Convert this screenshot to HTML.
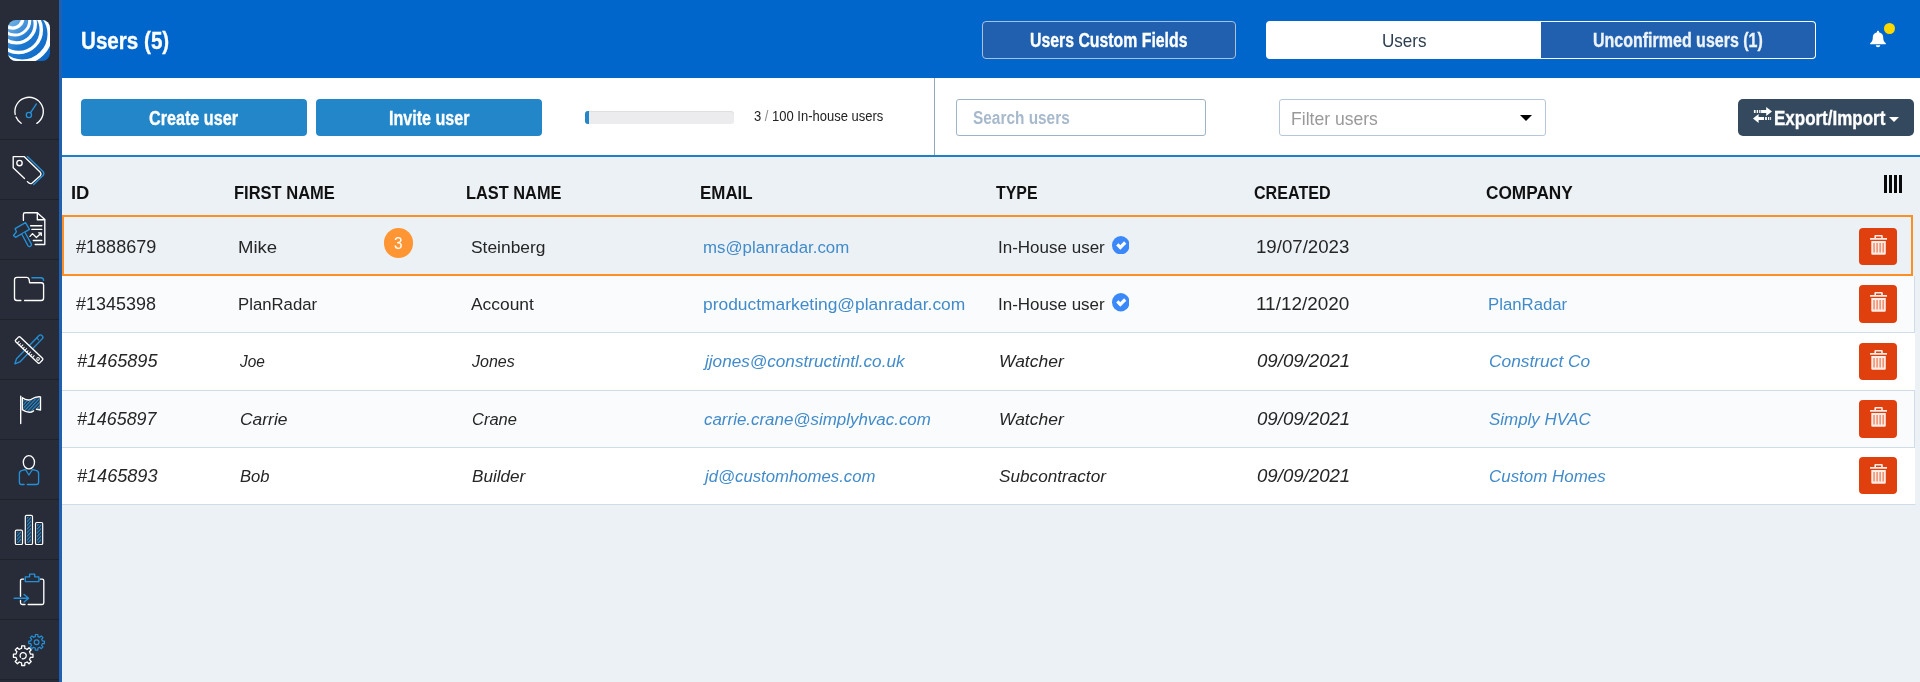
<!DOCTYPE html>
<html lang="en"><head><meta charset="utf-8"><title>Users</title>
<style>
*{box-sizing:border-box;margin:0;padding:0}
html,body{width:1920px;height:682px;overflow:hidden}
body{position:relative;background:#ecf1f5;font-family:"Liberation Sans",sans-serif;color:#222}
.t{position:absolute;display:block;white-space:nowrap;transform-origin:0 0}
aside.sb{position:absolute;left:0;top:0;width:62px;height:682px;background:#272c38;border-right:3px solid #1f60b0}
.sbsvg{position:absolute;left:0;top:0}
header.top{position:absolute;left:62px;top:0;width:1858px;height:78px;background:#0066cc}
header.top>*,section.bar>*,main.tbl>*{margin-left:-62px}
.hbtn{position:absolute;background:#2060ae;border:1px solid #a9c0de;border-radius:4px}
.tabw{position:absolute;background:#fff;border-radius:4px 0 0 4px}
.hbtn.tabr{border-color:#fff;border-left:0;border-radius:0 4px 4px 0}
.bell{position:absolute}
.dot{position:absolute;left:1883.9px;top:22.9px;width:11.2px;height:11.2px;border-radius:50%;background:#fcd800}
section.bar{position:absolute;left:62px;top:78px;width:1858px;height:79px;background:#fff;border-bottom:2px solid #1f7fc6}
section.bar>*{margin-top:-78px}
.pbtn{position:absolute;background:#2286c9;border-radius:4px}
.prog{position:absolute;left:585px;top:111px;width:149px;height:13px;background:#ececee;border-radius:3px;overflow:hidden;box-shadow:inset 0 1px 1px rgba(0,0,0,.06)}
.prog i{display:block;width:4px;height:100%;background:#2286c9}
.vdiv{position:absolute;left:934px;top:78px;width:1px;height:77px;background:#93a8bf}
.inp{position:absolute;background:#fff;border:1px solid #9fb3c8;border-radius:3px}
.tri{position:absolute;width:0;height:0;border-left:6px solid transparent;border-right:6px solid transparent;border-top:6.5px solid #000}
.ebtn{position:absolute;background:#34495e;border-radius:5px}
.exch{position:absolute}
.caret{position:absolute;width:0;height:0;border-left:5px solid transparent;border-right:5px solid transparent;border-top:5.5px solid #fff}
main.tbl{position:absolute;left:62px;top:157px;width:1858px;height:525px}
main.tbl>*{margin-top:-157px}
.row{position:absolute;left:62px;width:1854px;background:#fff;border-right:1px solid #eef2f6}
.row.alt{width:1853px;background:#f9fbfc;border:1px solid #d0dce7;border-left:0}
.row.r1{background:#ecf1f5;border:2px solid #ff8f24;width:1851px;z-index:2}
.cols{position:absolute;left:1884px;top:175px;width:18px;height:18px;display:flex;justify-content:space-between}
.cols b{display:block;width:3px;height:18px;background:#0a0a0a}
.badge{position:absolute;left:383.5px;top:228.4px;width:29.8px;height:29.8px;border-radius:50%;background:#ff9633;z-index:3}
.chk{position:absolute;z-index:3}
.del{position:absolute;left:1859px;width:38px;height:38px;background:#e0400e;border-radius:4px;z-index:3}
.trash{position:absolute;left:11px;top:7.2px}
main.tbl .t{z-index:4}
</style></head>
<body>
<aside class="sb">
<svg class="sbsvg" width="59" height="682" viewBox="0 0 59 682" fill="none" stroke-linecap="round" stroke-linejoin="round" stroke-width="1.35">
<defs>
<pattern id="hatch" width="2.5" height="2.5" patternUnits="userSpaceOnUse" patternTransform="rotate(-47)"><rect width="2.5" height="1.2" fill="#2490d8"/></pattern>
<clipPath id="lgclip"><rect x="8" y="20" width="42" height="41" rx="8" ry="8"/></clipPath>
<linearGradient id="lggrad" x1="0" y1="0" x2="1" y2="1"><stop offset="0" stop-color="#7ab8e6"/><stop offset="0.45" stop-color="#1c78cf"/><stop offset="1" stop-color="#0a66c4"/></linearGradient>
<filter id="lgblur" x="-10%" y="-10%" width="120%" height="120%"><feGaussianBlur stdDeviation="0.45"/></filter>
</defs>
<g clip-path="url(#lgclip)"><rect x="8" y="20" width="42" height="41" fill="url(#lggrad)"/>
<g stroke="#fff" fill="none" filter="url(#lgblur)">
<circle cx="12.8" cy="18.2" r="9.9" stroke-width="3.3"/>
<circle cx="15" cy="20.4" r="14.7" stroke-width="3"/>
<circle cx="16.5" cy="24.1" r="18.8" stroke-width="3.4"/>
<circle cx="18.7" cy="29.9" r="22.6" stroke-width="3.5"/>
<circle cx="22.3" cy="34.3" r="27.5" stroke-width="4.6"/>
</g></g>
<rect x="0" y="139" width="59" height="1" fill="#1e222b" stroke="none"/>
<rect x="0" y="199" width="59" height="1" fill="#1e222b" stroke="none"/>
<rect x="0" y="259" width="59" height="1" fill="#1e222b" stroke="none"/>
<rect x="0" y="319" width="59" height="1" fill="#1e222b" stroke="none"/>
<rect x="0" y="379" width="59" height="1" fill="#1e222b" stroke="none"/>
<rect x="0" y="439" width="59" height="1" fill="#1e222b" stroke="none"/>
<rect x="0" y="499" width="59" height="1" fill="#1e222b" stroke="none"/>
<rect x="0" y="559" width="59" height="1" fill="#1e222b" stroke="none"/>
<rect x="0" y="619" width="59" height="1" fill="#1e222b" stroke="none"/>
<rect x="0" y="679" width="59" height="1" fill="#1e222b" stroke="none"/>
<path d="M36.83,123.41 A14.2,14.2 0 1 0 15.21,114.45" stroke="#fff"/>
<path d="M16.03,117.05 A14.2,14.2 0 0 0 21.16,123.27" stroke="#fff"/>
<circle cx="28.9" cy="115" r="2.6" stroke="#2490d8"/>
<path d="M30.4,112.8 L36.4,103.9" stroke="#2490d8"/>
<path d="M24.5,178.6 L13.2,167.7 V156.6 H24.1 L40.3,172.2 Q41.8,174 40.3,175.8 L31.9,183.2 Q30,184.6 27.4,181.6" stroke="#fff"/>
<circle cx="19.5" cy="163" r="2.7" stroke="#fff"/>
<path d="M27.4,156.6 L43.2,171.8 Q44.6,173.6 43,175.6 L33.7,184.5" stroke="#2490d8"/>
<path d="M23.4,220.3 V214.4 Q23.4,212.7 25,212.7 H37.3 L44.8,219.6 V244.5 H35.2" stroke="#fff"/>
<path d="M37.3,212.9 V219.7 H44.6" stroke="#fff"/>
<path d="M30.6,225.7 H41.8 M31.9,229.4 H41.8 M33.3,240.5 H41.8" stroke="#fff"/>
<path d="M30,236.4 L32.5,233.6 L36.4,237.5 L41,233.2 M38.6,232.8 L41.3,232.8 L41.3,235.4" stroke="#fff" stroke-width="1.3"/>
<path d="M15.1,228.6 L25.5,222.6 L29.5,229.3 L15.5,237.3 L13.5,235.5 L16.4,231.8 Z" stroke="#2490d8" fill="#272c38"/>
<path d="M21.8,234.3 L27.8,245.4 A1.9,1.9 0 0 0 31.3,243.9 L25,232.5" stroke="#2490d8" fill="#272c38"/>
<path d="M20.9,300.5 H17 Q14.5,300.5 14.5,298 V279.8 Q14.5,277.4 17,277.4 H26.8 Q28.7,277.4 29.1,279.5 L29.6,282.7 H41.2 Q43.6,282.7 43.6,285 V298 Q43.6,300.5 41.2,300.5 H24.6" stroke="#fff"/>
<path d="M31.9,277.7 H40.8 Q43.6,277.7 43.6,280.4" stroke="#2490d8"/>
<g transform="translate(28.6,349.6) rotate(-46)">
<path d="M-15,-2.3 H17.1 Q19.4,-2.3 19.4,0 Q19.4,2.3 17.1,2.3 H-15 L-19.8,0 Z" stroke="#2490d8"/>
<path d="M14,-2.3 V0.5" stroke="#2490d8" stroke-width="1"/>
</g>
<g transform="translate(29.1,350) rotate(43.5)">
<rect x="-16.6" y="-3.2" width="33.2" height="6.4" rx="1.2" stroke="#fff" fill="#272c38"/>
<path d="M-13.20,3.2 V0.60" stroke="#fff" stroke-width="1"/>
<path d="M-10.60,3.2 V1.40" stroke="#fff" stroke-width="1"/>
<path d="M-8.00,3.2 V0.60" stroke="#fff" stroke-width="1"/>
<path d="M-5.40,3.2 V1.40" stroke="#fff" stroke-width="1"/>
<path d="M-2.80,3.2 V0.60" stroke="#fff" stroke-width="1"/>
<path d="M-0.20,3.2 V1.40" stroke="#fff" stroke-width="1"/>
<path d="M2.40,3.2 V0.60" stroke="#fff" stroke-width="1"/>
<path d="M5.00,3.2 V1.40" stroke="#fff" stroke-width="1"/>
<path d="M7.60,3.2 V0.60" stroke="#fff" stroke-width="1"/>
<circle cx="12.6" cy="0.3" r="1.3" stroke="#fff" stroke-width="1"/>
</g>
<path d="M23.3,399.3 Q27,401.9 31.3,400.3 Q36,397.4 39.6,397.8 V408.8 Q37.6,408.2 35.6,408.6 L33,410 Q29,412.8 23.3,408.8 Z" fill="url(#hatch)" stroke="none"/>
<path d="M22.3,397.7 Q27,401.2 31.3,399.3 Q36,396.2 40.5,396.8 V410 Q38.4,409.2 36.4,409.2 M33.6,410.9 Q29,414.2 22.3,409.6 V397.7" stroke="#fff"/>
<path d="M20.7,396.2 V423.6" stroke="#fff"/>
<ellipse cx="28.9" cy="462.3" rx="5.6" ry="6.6" stroke="#fff"/>
<path d="M24.1,484.5 H21.5 Q19.4,484.5 19.4,482.3 V473.4 Q19.4,471 22.3,470.4 L25.5,469.5 L28.9,475 L32.5,469.5 L35.8,470.4 Q38.6,471 38.6,473.4 V482.3 Q38.6,484.5 36.4,484.5 H27.3" stroke="#2490d8"/>
<rect x="16.8" y="531.7" width="4.2" height="11.3" fill="url(#hatch)" stroke="none"/>
<rect x="15.3" y="530.2" width="7.2" height="14.3" rx="1.3" stroke="#fff" stroke-width="1.2"/>
<rect x="26.8" y="516.8" width="4.2" height="26.2" fill="url(#hatch)" stroke="none"/>
<rect x="25.3" y="515.3" width="7.2" height="29.2" rx="1.3" stroke="#fff" stroke-width="1.2"/>
<rect x="37" y="524" width="4.2" height="19" fill="url(#hatch)" stroke="none"/>
<rect x="35.5" y="522.5" width="7.2" height="22" rx="1.3" stroke="#fff" stroke-width="1.2"/>
<path d="M23.6,579.1 H22 Q20.5,579.1 20.5,580.7 V596.2 M20.5,600.4 V602.8 Q20.5,604.5 22.3,604.5 H25 M28.2,604.5 H42.2 Q43.8,604.5 43.8,602.8 V580.7 Q43.8,579.1 42.2,579.1 H40.2" stroke="#fff"/>
<path d="M25.3,576.8 H29.6 V574.1 H34.7 V576.8 H38.9 V581.6 H25.3 Z" stroke="#2490d8"/>
<path d="M14.1,598.2 H28.4 M24.1,594.4 L28.6,598.2 L24.1,602" stroke="#2490d8"/>
<path d="M21.54,648.49 L21.65,645.92 L24.75,645.92 L24.86,648.49 A7.40,7.40 0 0 1 27.13,649.43 L27.13,649.43 L29.02,647.69 L31.21,649.88 L29.47,651.77 A7.40,7.40 0 0 1 30.41,654.04 L30.41,654.04 L32.98,654.15 L32.98,657.25 L30.41,657.36 A7.40,7.40 0 0 1 29.47,659.63 L29.47,659.63 L31.21,661.52 L29.02,663.71 L27.13,661.97 A7.40,7.40 0 0 1 24.86,662.91 L24.86,662.91 L24.75,665.48 L21.65,665.48 L21.54,662.91 A7.40,7.40 0 0 1 19.27,661.97 L19.27,661.97 L17.38,663.71 L15.19,661.52 L16.93,659.63 A7.40,7.40 0 0 1 15.99,657.36 L15.99,657.36 L13.42,657.25 L13.42,654.15 L15.99,654.04 A7.40,7.40 0 0 1 16.93,651.77 L16.93,651.77 L15.19,649.88 L17.38,647.69 L19.27,649.43 A7.40,7.40 0 0 1 21.54,648.49 Z" stroke="#fff" stroke-width="1.3"/>
<path d="M20.5,657.25 A3.1,3.1 0 1 1 22.14,658.6" stroke="#fff" stroke-width="1.3"/>
<path d="M35.28,636.55 L35.36,634.50 L37.84,634.50 L37.92,636.55 A5.90,5.90 0 0 1 39.73,637.30 L39.73,637.30 L41.24,635.91 L42.99,637.66 L41.60,639.17 A5.90,5.90 0 0 1 42.35,640.98 L42.35,640.98 L44.40,641.06 L44.40,643.54 L42.35,643.62 A5.90,5.90 0 0 1 41.60,645.43 L41.60,645.43 L42.99,646.94 L41.24,648.69 L39.73,647.30 A5.90,5.90 0 0 1 37.92,648.05 L37.92,648.05 L37.84,650.10 L35.36,650.10 L35.28,648.05 A5.90,5.90 0 0 1 33.47,647.30 L33.47,647.30 L31.96,648.69 L30.21,646.94 L31.60,645.43 A5.90,5.90 0 0 1 30.85,643.62 L30.85,643.62 L28.80,643.54 L28.80,641.06 L30.85,640.98 A5.90,5.90 0 0 1 31.60,639.17 L31.60,639.17 L30.21,637.66 L31.96,635.91 L33.47,637.30 A5.90,5.90 0 0 1 35.28,636.55 Z" stroke="#2490d8" stroke-width="1.2"/>
<circle cx="36.6" cy="642.3" r="2.4" stroke="#2490d8" stroke-width="1.2"/>
</svg>
</aside>
<header class="top">
<span class="t" style="left:80.56px;top:27px;font-size:24.6px;line-height:27px;font-weight:700;color:#fff;transform:scaleX(0.8383);-webkit-text-stroke:0.35px currentColor;">Users (5)</span>
<div class="hbtn" style="left:982px;top:21px;width:254px;height:38px"></div>
<span class="t" style="left:1030.48px;top:29px;font-size:19.4px;line-height:22px;font-weight:700;color:#fff;transform:scaleX(0.8163);-webkit-text-stroke:0.35px currentColor;">Users Custom Fields</span>
<div class="tabw" style="left:1266px;top:21px;width:275px;height:38px"></div>
<span class="t" style="left:1381.96px;top:31px;font-size:18.2px;line-height:20px;color:#2c3e50;transform:scaleX(0.9375);">Users</span>
<div class="hbtn tabr" style="left:1541px;top:21px;width:275px;height:38px"></div>
<span class="t" style="left:1593.17px;top:29px;font-size:19.4px;line-height:22px;font-weight:700;color:#eef3f9;transform:scaleX(0.8251);-webkit-text-stroke:0.35px currentColor;">Unconfirmed users (1)</span>
<svg class="bell" style="left:1870px;top:30px" width="16" height="18" viewBox="0 0 16 18"><path fill="#fff" d="M8,0.8 C8.6,0.8 9,1.2 9,1.8 V2.2 C11.6,2.7 13.2,4.7 13.2,7.3 C13.2,10.2 13.9,11.6 15.6,13 C16.2,13.6 15.9,14.3 15.2,14.3 H0.8 C0.1,14.3 -0.2,13.6 0.4,13 C2.1,11.6 2.8,10.2 2.8,7.3 C2.8,4.7 4.4,2.7 7,2.2 V1.8 C7,1.2 7.4,0.8 8,0.8 Z M5.8,15.3 H10.2 C10.2,16.5 9.2,17.3 8,17.3 C6.8,17.3 5.8,16.5 5.8,15.3 Z"/></svg>
<i class="dot"></i>
</header>
<section class="bar">
<div class="pbtn" style="left:81px;top:99px;width:226px;height:37px"></div>
<span class="t" style="left:149.00px;top:107px;font-size:19.4px;line-height:22px;font-weight:700;color:#fff;transform:scaleX(0.8343);-webkit-text-stroke:0.35px currentColor;">Create user</span>
<div class="pbtn" style="left:316px;top:99px;width:226px;height:37px"></div>
<span class="t" style="left:388.67px;top:107px;font-size:19.4px;line-height:22px;font-weight:700;color:#fff;transform:scaleX(0.8295);-webkit-text-stroke:0.35px currentColor;">Invite user</span>
<div class="prog"><i></i></div>
<span class="t" style="left:754.00px;top:108px;font-size:14px;line-height:16px;color:#222;transform:scaleX(0.9281);">3 <span style="color:#888">/</span> 100 In-house users</span>
<i class="vdiv"></i>
<div class="inp" style="left:956px;top:99px;width:250px;height:37px;border-color:#9fb3c8"></div>
<span class="t" style="left:972.50px;top:107px;font-size:19.2px;line-height:21px;font-weight:700;color:#a7b9cc;transform:scaleX(0.8026);">Search users</span>
<div class="inp" style="left:1279px;top:99px;width:267px;height:37px;border-color:#b7c7da"></div>
<span class="t" style="left:1291.23px;top:109px;font-size:18.2px;line-height:20px;color:#999;transform:scaleX(0.9657);">Filter users</span>
<i class="tri" style="left:1520px;top:115px"></i>
<div class="ebtn" style="left:1738px;top:99px;width:176px;height:37px"></div>
<svg class="exch" style="left:1752.9px;top:107px" width="19" height="16" viewBox="0 0 19 16"><path fill="#fff" d="M13.2,0 L19,4.45 L13.2,8.9 V6 H8.1 V3 H13.2 Z M0.9,3 H2.6 V6 H0.9 Z M3.7,3 H5.1 V6 H3.7 Z M6.2,3 H7.5 V6 H6.2 Z M5.6,7.1 L0,11.5 L5.6,15.9 V13 H11 V10.1 H5.6 Z M12.1,10.1 H13.9 V13 H12.1 Z M15,10.1 H16.3 V13 H15 Z M17.2,10.1 H18.1 V13 H17.2 Z"/></svg>
<span class="t" style="left:1773.62px;top:107px;font-size:19.4px;line-height:22px;font-weight:700;color:#fff;transform:scaleX(0.8756);-webkit-text-stroke:0.35px currentColor;">Export/Import</span>
<i class="caret" style="left:1889px;top:116.5px"></i>
</section>
<main class="tbl">
<span class="t" style="left:71.26px;top:183px;font-size:17.7px;line-height:20px;font-weight:700;color:#111;transform:scaleX(1.0405);">ID</span>
<span class="t" style="left:233.77px;top:183px;font-size:17.7px;line-height:20px;font-weight:700;color:#111;transform:scaleX(0.9330);">FIRST NAME</span>
<span class="t" style="left:466.47px;top:183px;font-size:17.7px;line-height:20px;font-weight:700;color:#111;transform:scaleX(0.9250);">LAST NAME</span>
<span class="t" style="left:699.64px;top:183px;font-size:17.7px;line-height:20px;font-weight:700;color:#111;transform:scaleX(0.9572);">EMAIL</span>
<span class="t" style="left:995.60px;top:183px;font-size:17.7px;line-height:20px;font-weight:700;color:#111;transform:scaleX(0.8987);">TYPE</span>
<span class="t" style="left:1253.70px;top:183px;font-size:17.7px;line-height:20px;font-weight:700;color:#111;transform:scaleX(0.9099);">CREATED</span>
<span class="t" style="left:1486.20px;top:183px;font-size:17.7px;line-height:20px;font-weight:700;color:#111;transform:scaleX(0.9743);">COMPANY</span>
<i class="cols"><b></b><b></b><b></b><b></b></i>
<div class="row r1" style="top:215px;height:61px"></div>
<div class="row alt" style="top:276px;height:57px;border-top:0"></div>
<div class="row" style="top:333px;height:57px"></div>
<div class="row alt" style="top:390px;height:58px"></div>
<div class="row" style="top:448px;height:57px;border-bottom:1px solid #d0dce7"></div>
<span class="t" style="left:75.80px;top:237px;font-size:17.8px;line-height:20px;color:#262626;transform:scaleX(1.0148);">#1888679</span>
<span class="t" style="left:237.53px;top:237px;font-size:17.4px;line-height:20px;color:#262626;transform:scaleX(1.0672);">Mike</span>
<span class="t" style="left:471.00px;top:237px;font-size:17.4px;line-height:20px;color:#262626;transform:scaleX(1.0004);">Steinberg</span>
<span class="t" style="left:702.53px;top:237px;font-size:17.4px;line-height:20px;color:#428bca;transform:scaleX(0.9682);">ms@planradar.com</span>
<span class="t" style="left:998.02px;top:237px;font-size:17.4px;line-height:20px;color:#262626;transform:scaleX(0.9775);">In-House user</span>
<span class="t" style="left:1255.55px;top:237px;font-size:17.8px;line-height:20px;color:#262626;transform:scaleX(1.0488);">19/07/2023</span>
<span class="t" style="left:76.20px;top:294px;font-size:17.8px;line-height:20px;color:#262626;transform:scaleX(1.0098);">#1345398</span>
<span class="t" style="left:237.94px;top:294px;font-size:17.4px;line-height:20px;color:#262626;transform:scaleX(0.9621);">PlanRadar</span>
<span class="t" style="left:470.90px;top:294px;font-size:17.4px;line-height:20px;color:#262626;transform:scaleX(0.9999);">Account</span>
<span class="t" style="left:702.75px;top:294px;font-size:17.4px;line-height:20px;color:#428bca;transform:scaleX(1.0001);">productmarketing@planradar.com</span>
<span class="t" style="left:997.92px;top:294px;font-size:17.4px;line-height:20px;color:#262626;transform:scaleX(0.9766);">In-House user</span>
<span class="t" style="left:1255.54px;top:294px;font-size:17.8px;line-height:20px;color:#262626;transform:scaleX(1.0647);">11/12/2020</span>
<span class="t" style="left:1487.84px;top:294px;font-size:17.4px;line-height:20px;color:#428bca;transform:scaleX(0.9634);">PlanRadar</span>
<span class="t" style="left:76.70px;top:351px;font-size:17.8px;line-height:20px;font-style:italic;color:#262626;transform:scaleX(1.0174);">#1465895</span>
<span class="t" style="left:239.79px;top:351px;font-size:17.4px;line-height:20px;font-style:italic;color:#262626;transform:scaleX(0.8887);">Joe</span>
<span class="t" style="left:472.32px;top:351px;font-size:17.4px;line-height:20px;font-style:italic;color:#262626;transform:scaleX(0.9222);">Jones</span>
<span class="t" style="left:705.27px;top:351px;font-size:17.4px;line-height:20px;font-style:italic;color:#428bca;transform:scaleX(0.9865);">jjones@constructintl.co.uk</span>
<span class="t" style="left:998.80px;top:351px;font-size:17.4px;line-height:20px;font-style:italic;color:#262626;transform:scaleX(1.0040);">Watcher</span>
<span class="t" style="left:1257.20px;top:351px;font-size:17.8px;line-height:20px;font-style:italic;color:#262626;transform:scaleX(1.0476);">09/09/2021</span>
<span class="t" style="left:1489.40px;top:351px;font-size:17.4px;line-height:20px;font-style:italic;color:#428bca;transform:scaleX(0.9979);">Construct Co</span>
<span class="t" style="left:76.70px;top:409px;font-size:17.8px;line-height:20px;font-style:italic;color:#262626;transform:scaleX(1.0047);">#1465897</span>
<span class="t" style="left:239.50px;top:409px;font-size:17.4px;line-height:20px;font-style:italic;color:#262626;transform:scaleX(1.0026);">Carrie</span>
<span class="t" style="left:472.00px;top:409px;font-size:17.4px;line-height:20px;font-style:italic;color:#262626;transform:scaleX(0.9477);">Crane</span>
<span class="t" style="left:704.20px;top:409px;font-size:17.4px;line-height:20px;font-style:italic;color:#428bca;transform:scaleX(0.9730);">carrie.crane@simplyhvac.com</span>
<span class="t" style="left:998.80px;top:409px;font-size:17.4px;line-height:20px;font-style:italic;color:#262626;transform:scaleX(1.0040);">Watcher</span>
<span class="t" style="left:1257.20px;top:409px;font-size:17.8px;line-height:20px;font-style:italic;color:#262626;transform:scaleX(1.0476);">09/09/2021</span>
<span class="t" style="left:1489.40px;top:409px;font-size:17.4px;line-height:20px;font-style:italic;color:#428bca;transform:scaleX(0.9741);">Simply HVAC</span>
<span class="t" style="left:76.70px;top:466px;font-size:17.8px;line-height:20px;font-style:italic;color:#262626;transform:scaleX(1.0174);">#1465893</span>
<span class="t" style="left:239.50px;top:466px;font-size:17.4px;line-height:20px;font-style:italic;color:#262626;transform:scaleX(0.9561);">Bob</span>
<span class="t" style="left:472.00px;top:466px;font-size:17.4px;line-height:20px;font-style:italic;color:#262626;transform:scaleX(0.9848);">Builder</span>
<span class="t" style="left:705.22px;top:466px;font-size:17.4px;line-height:20px;font-style:italic;color:#428bca;transform:scaleX(0.9623);">jd@customhomes.com</span>
<span class="t" style="left:999.40px;top:466px;font-size:17.4px;line-height:20px;font-style:italic;color:#262626;transform:scaleX(0.9874);">Subcontractor</span>
<span class="t" style="left:1257.20px;top:466px;font-size:17.8px;line-height:20px;font-style:italic;color:#262626;transform:scaleX(1.0476);">09/09/2021</span>
<span class="t" style="left:1489.40px;top:466px;font-size:17.4px;line-height:20px;font-style:italic;color:#428bca;transform:scaleX(0.9731);">Custom Homes</span>
<i class="badge"></i>
<span class="t" style="left:393.90px;top:234px;font-size:16.6px;line-height:19px;color:#fff;transform:scaleX(0.9222);">3</span>
<svg class="chk" style="left:1111.85px;top:235.7px" width="17.6" height="18.4" viewBox="0 0 17.6 18.4"><ellipse cx="8.8" cy="9.2" rx="8.8" ry="9.2" fill="#3b88fb"/><path d="M5.3,8.4 L8.3,11.4 L13.2,6.5" fill="none" stroke="#fff" stroke-width="3.2" stroke-linecap="butt" stroke-linejoin="miter"/></svg>
<svg class="chk" style="left:1111.85px;top:293.2px" width="17.6" height="18.4" viewBox="0 0 17.6 18.4"><ellipse cx="8.8" cy="9.2" rx="8.8" ry="9.2" fill="#3b88fb"/><path d="M5.3,8.4 L8.3,11.4 L13.2,6.5" fill="none" stroke="#fff" stroke-width="3.2" stroke-linecap="butt" stroke-linejoin="miter"/></svg>
<div class="del" style="top:228px;height:37px"><svg class="trash" width="17.2" height="19.8" viewBox="0 0 17.2 19.8"><path fill="#fdece6" fill-rule="evenodd" d="M4.4,3 V1 Q4.4,0 5.4,0 H11.8 Q12.8,0 12.8,1 V3 H11.2 V1.5 H6 V3 Z"/><rect x="0" y="2.9" width="17.2" height="1.9" rx="0.4" fill="#fdece6"/><path fill="#fdece6" d="M1.3,6 H15.8 V18.5 Q15.8,19.7 14.6,19.7 H2.5 Q1.3,19.7 1.3,18.5 Z"/><path fill="#ee8c6c" d="M3.3,8 H4.8 V17.6 H3.3 Z M6.35,8 H7.85 V17.6 H6.35 Z M9.4,8 H10.9 V17.6 H9.4 Z M12.45,8 H13.95 V17.6 H12.45 Z"/></svg></div>
<div class="del" style="top:285px;height:38px"><svg class="trash" width="17.2" height="19.8" viewBox="0 0 17.2 19.8"><path fill="#fdece6" fill-rule="evenodd" d="M4.4,3 V1 Q4.4,0 5.4,0 H11.8 Q12.8,0 12.8,1 V3 H11.2 V1.5 H6 V3 Z"/><rect x="0" y="2.9" width="17.2" height="1.9" rx="0.4" fill="#fdece6"/><path fill="#fdece6" d="M1.3,6 H15.8 V18.5 Q15.8,19.7 14.6,19.7 H2.5 Q1.3,19.7 1.3,18.5 Z"/><path fill="#ee8c6c" d="M3.3,8 H4.8 V17.6 H3.3 Z M6.35,8 H7.85 V17.6 H6.35 Z M9.4,8 H10.9 V17.6 H9.4 Z M12.45,8 H13.95 V17.6 H12.45 Z"/></svg></div>
<div class="del" style="top:343px;height:37px"><svg class="trash" width="17.2" height="19.8" viewBox="0 0 17.2 19.8"><path fill="#fdece6" fill-rule="evenodd" d="M4.4,3 V1 Q4.4,0 5.4,0 H11.8 Q12.8,0 12.8,1 V3 H11.2 V1.5 H6 V3 Z"/><rect x="0" y="2.9" width="17.2" height="1.9" rx="0.4" fill="#fdece6"/><path fill="#fdece6" d="M1.3,6 H15.8 V18.5 Q15.8,19.7 14.6,19.7 H2.5 Q1.3,19.7 1.3,18.5 Z"/><path fill="#ee8c6c" d="M3.3,8 H4.8 V17.6 H3.3 Z M6.35,8 H7.85 V17.6 H6.35 Z M9.4,8 H10.9 V17.6 H9.4 Z M12.45,8 H13.95 V17.6 H12.45 Z"/></svg></div>
<div class="del" style="top:400px;height:38px"><svg class="trash" width="17.2" height="19.8" viewBox="0 0 17.2 19.8"><path fill="#fdece6" fill-rule="evenodd" d="M4.4,3 V1 Q4.4,0 5.4,0 H11.8 Q12.8,0 12.8,1 V3 H11.2 V1.5 H6 V3 Z"/><rect x="0" y="2.9" width="17.2" height="1.9" rx="0.4" fill="#fdece6"/><path fill="#fdece6" d="M1.3,6 H15.8 V18.5 Q15.8,19.7 14.6,19.7 H2.5 Q1.3,19.7 1.3,18.5 Z"/><path fill="#ee8c6c" d="M3.3,8 H4.8 V17.6 H3.3 Z M6.35,8 H7.85 V17.6 H6.35 Z M9.4,8 H10.9 V17.6 H9.4 Z M12.45,8 H13.95 V17.6 H12.45 Z"/></svg></div>
<div class="del" style="top:457px;height:37px"><svg class="trash" width="17.2" height="19.8" viewBox="0 0 17.2 19.8"><path fill="#fdece6" fill-rule="evenodd" d="M4.4,3 V1 Q4.4,0 5.4,0 H11.8 Q12.8,0 12.8,1 V3 H11.2 V1.5 H6 V3 Z"/><rect x="0" y="2.9" width="17.2" height="1.9" rx="0.4" fill="#fdece6"/><path fill="#fdece6" d="M1.3,6 H15.8 V18.5 Q15.8,19.7 14.6,19.7 H2.5 Q1.3,19.7 1.3,18.5 Z"/><path fill="#ee8c6c" d="M3.3,8 H4.8 V17.6 H3.3 Z M6.35,8 H7.85 V17.6 H6.35 Z M9.4,8 H10.9 V17.6 H9.4 Z M12.45,8 H13.95 V17.6 H12.45 Z"/></svg></div>
</main>
</body></html>
